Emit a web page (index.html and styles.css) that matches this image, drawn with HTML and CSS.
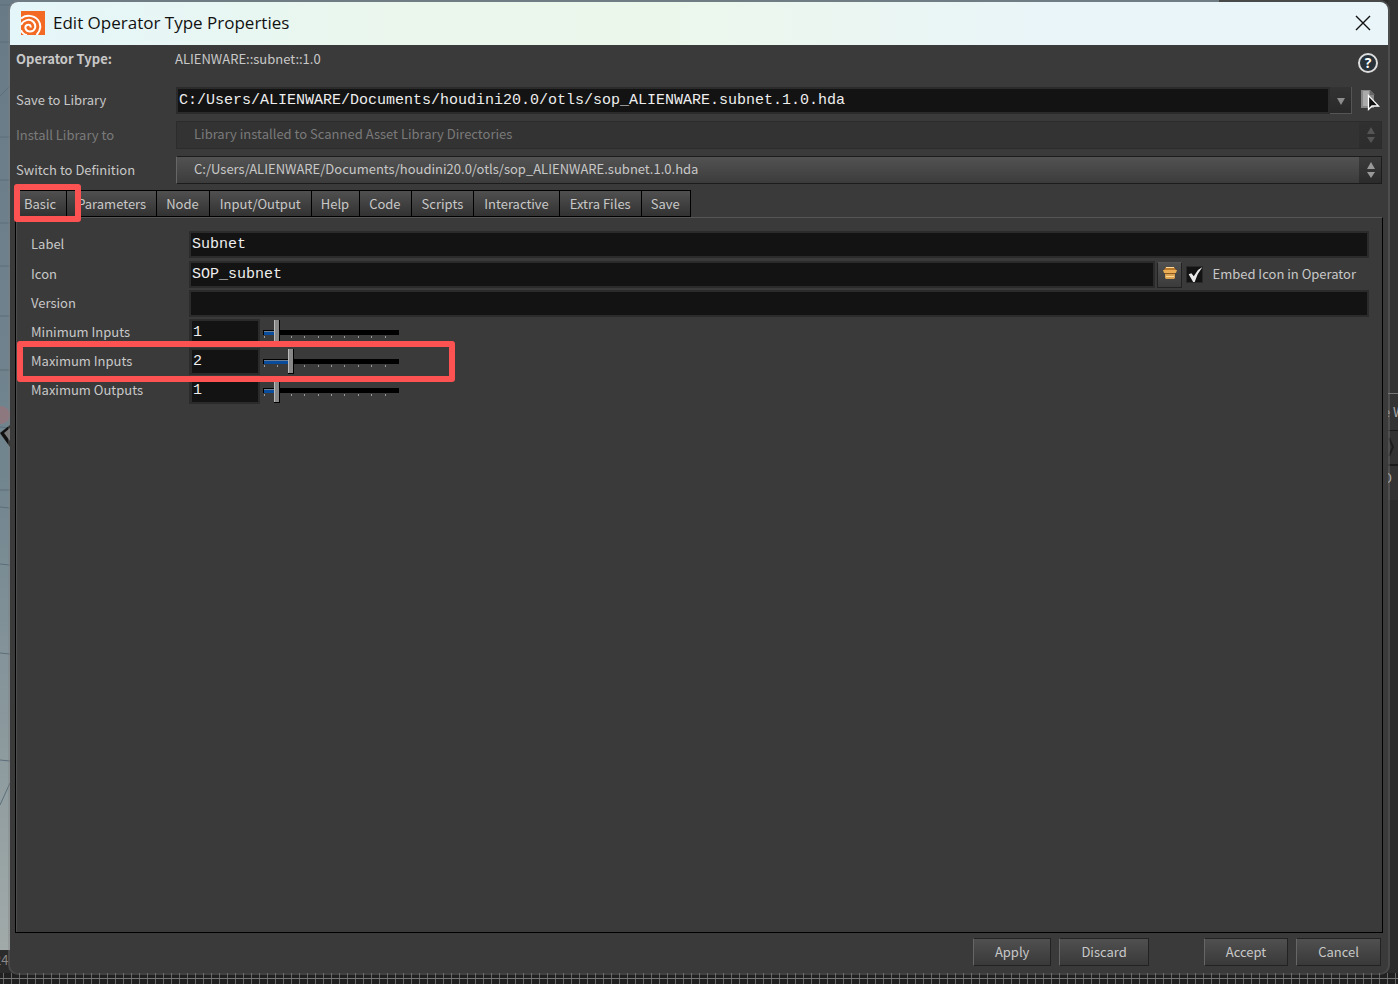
FILE: index.html
```html
<!DOCTYPE html>
<html lang="en">
<head>
    <meta charset="UTF-8">
    <meta name="viewport" content="width=device-width, initial-scale=1.0">
    <title>Edit Operator Type Properties</title>
    <link rel="stylesheet" href="styles.css">
</head>
<body>

<!-- Main application behind the dialog -->
<div class="backdrop" aria-hidden="true">
    <div class="viewport">
        <svg width="10" height="950" viewBox="0 0 10 950">
            <g stroke="#5c6e78" stroke-width="1" fill="none">
                <path d="M0 5h10M0 42h10M0 96L10 86M0 137h10M0 180h10M0 223h10M0 266h10M0 316h10M0 370h10M0 427l10 1M0 490h10M0 507l10 1M0 564l10 1M0 653l10 1M0 760l10 1M0 805l10-22"/>
            </g>
            <ellipse cx="1" cy="415" rx="9" ry="9" fill="#8e7880"/>
            <path d="M10 426L0 434l10 13z" fill="#777"/>
            <path d="M10 425L0 433l10 14v-6l-6-8 6-5z" fill="#111"/>
        </svg>
    </div>
    <div class="side">
        <span class="side-line"></span>
        <span class="side-text">e W</span>
        <svg width="10" height="36" viewBox="0 0 10 36"><path d="M0 0h10M0 35h10" stroke="#050505"/><path d="M1 8l4 9-4 9" fill="none" stroke="#1c1c1c" stroke-width="2"/></svg>
        <span class="side-text">D</span>
    </div>
    <div class="frame-number">24</div>
    <div class="timeline"></div>
</div>

<main class="window">
    <header class="titlebar">
        <svg class="logo" width="24" height="24" viewBox="0 0 24 24">
            <rect width="24" height="24" fill="#f26a24"/>
            <g fill="none" stroke="#fff" stroke-width="2">
                <path d="M0 7.500C5 3.500 13 4 17 9c3.500 4.500 3 10.500-1.500 15"/>
                <path d="M0 14C2 9 9 7 12.500 11c3.500 4 1.500 9.500-3.500 9.500-4.500 0-6-5-3-6.500 2.500-1 4 .5 3.500 2.500"/>
                <path d="M0 19c1 2.500 3 4.500 6 5"/>
            </g>
        </svg>
        <h1>Edit Operator Type Properties</h1>
        <button class="close" type="button" aria-label="Close">
            <svg width="16" height="16" viewBox="0 0 16 16"><path d="M1 1l14 14M15 1L1 15" stroke="#111" stroke-width="1.400"/></svg>
        </button>
    </header>

    <form class="content">
        <section class="settings">
            <div class="row type-row">
                <span class="caption strong">Operator Type:</span>
                <span class="type-name">ALIENWARE::subnet::1.0</span>
                <button class="help" type="button" aria-label="Help">?</button>
            </div>
            <div class="row">
                <label class="caption" for="library">Save to Library</label>
                <div class="combo">
                    <input class="field" id="library" type="text" value="C:/Users/ALIENWARE/Documents/houdini20.0/otls/sop_ALIENWARE.subnet.1.0.hda">
                    <button class="drop" type="button" aria-label="Recent libraries">
                        <svg width="8" height="7" viewBox="0 0 8 7"><path d="M0 0h8L4 7z" fill="#8c8c8c"/></svg>
                    </button>
                </div>
                <button class="chooser" type="button" aria-label="Choose file">
                    <svg width="22" height="24" viewBox="0 0 22 24">
                        <path d="M1 2h9l4 4v14H1z" fill="#888"/>
                        <path d="M3 3h6v15H3z" fill="#aaa"/>
                        <path d="M10 2v5h5z" fill="#666"/>
                        <path d="M8.500 7.500v14l3.500-3.500h6.500z" fill="#111" stroke="#fff" stroke-width="1.300"/>
                    </svg>
                </button>
            </div>
            <div class="row">
                <label class="caption dim" for="install">Install Library to</label>
                <div class="select disabled">
                    <select id="install" disabled>
                        <option>Library installed to Scanned Asset Library Directories</option>
                    </select>
                    <svg class="arrows" width="8" height="16" viewBox="0 0 8 16"><path d="M4 0l4 7H0zM0 10h8l-4 6z"/></svg>
                </div>
            </div>
            <div class="row">
                <label class="caption" for="definition">Switch to Definition</label>
                <div class="select">
                    <select id="definition">
                        <option>C:/Users/ALIENWARE/Documents/houdini20.0/otls/sop_ALIENWARE.subnet.1.0.hda</option>
                    </select>
                    <svg class="arrows" width="8" height="16" viewBox="0 0 8 16"><path d="M4 0l4 7H0zM0 10h8l-4 6z"/></svg>
                </div>
            </div>
        </section>

        <nav class="tabs">
            <button type="button">Basic</button>
            <button class="long" type="button">Parameters</button>
            <button type="button">Node</button>
            <button class="long" type="button">Input/Output</button>
            <button type="button">Help</button>
            <button type="button">Code</button>
            <button class="long" type="button">Scripts</button>
            <button class="long" type="button">Interactive</button>
            <button class="long" type="button">Extra Files</button>
            <button type="button">Save</button>
            <span class="marker marker-tab"></span>
        </nav>

        <section class="panel">
            <div class="param">
                <label for="label">Label</label>
                <input class="field" id="label" type="text" value="Subnet">
            </div>
            <div class="param">
                <label for="icon">Icon</label>
                <input class="field" id="icon" type="text" value="SOP_subnet">
                <button class="pick" type="button" aria-label="Choose icon">
                    <svg width="14" height="14" viewBox="0 0 14 14">
                        <path d="M3 1h8l2 3H1z" fill="#b9782a"/>
                        <path d="M0 4h14l-1 3H1z" fill="#eaad55"/>
                        <path d="M2 7h10v5l-1 1H3l-1-1z" fill="#d9a050"/>
                        <path d="M2 7.500h10" stroke="#8a5a20"/>
                        <path d="M3 1.500h8M3 10.500h8" stroke="#ffd996"/>
                    </svg>
                </button>
                <input class="check" id="embed" type="checkbox" checked>
                <label class="embed-label" for="embed">Embed Icon in Operator</label>
            </div>
            <div class="param">
                <label for="version">Version</label>
                <input class="field" id="version" type="text" value="">
            </div>
            <div class="param">
                <label for="minInputs">Minimum Inputs</label>
                <input class="field number" id="minInputs" type="text" value="1">
                <input class="slider" type="range" min="0" max="10" value="1" style="--value: 1" aria-label="Minimum Inputs">
            </div>
            <div class="param">
                <label for="maxInputs">Maximum Inputs</label>
                <input class="field number" id="maxInputs" type="text" value="2">
                <input class="slider" type="range" min="0" max="10" value="2" style="--value: 2" aria-label="Maximum Inputs">
                <span class="marker marker-inputs"></span>
            </div>
            <div class="param">
                <label for="maxOutputs">Maximum Outputs</label>
                <input class="field number" id="maxOutputs" type="text" value="1">
                <input class="slider" type="range" min="0" max="10" value="1" style="--value: 1" aria-label="Maximum Outputs">
            </div>
        </section>

        <footer class="actions">
            <button type="button">Apply</button>
            <button type="button">Discard</button>
            <button class="accept" type="button">Accept</button>
            <button type="button">Cancel</button>
        </footer>
    </form>
</main>

</body>
</html>
```
FILE: styles.css
```css
* {
    box-sizing: border-box;
}
body {
    margin: 0;
    padding: 2px 10px 11px;
    height: 100vh;
    display: flex;
    background: #333;
    color: #c8c8c8;
    font-family: "Noto Sans CJK SC", sans-serif;
    font-size: 13px;
    line-height: 20px;
    overflow: hidden;
}
button, input, select {
    margin: 0;
    padding: 0;
    border: 0;
    border-radius: 0;
    color: inherit;
    font: inherit;
}
button {
    background: none;
}

/* Application behind the dialog */
.backdrop {
    position: absolute;
    inset: 0;
    z-index: -1;
    overflow: hidden;
    background: #2b2b2b;
}
.viewport {
    position: absolute;
    inset: 0 179px 34px 0;
    background: linear-gradient(#687a86, #71858f 50%, #a1aaa9);
}
.side {
    position: absolute;
    top: 0;
    right: 0;
    width: 10px;
    height: 500px;
    padding-top: 393px;
    background: #333;
    overflow: hidden;
}
.side > * {
    display: block;
}
.side-line {
    height: 7px;
    border-top: 1px solid #777;
}
.side-text {
    height: 30px;
    margin-left: -5px;
    padding-top: 2px;
    white-space: nowrap;
    color: #aaa;
}
.frame-number {
    position: absolute;
    left: -6px;
    bottom: 14px;
    color: #888;
}
.timeline {
    position: absolute;
    left: 0;
    right: 0;
    bottom: 0;
    height: 11px;
    background:
        linear-gradient(transparent 5px, #777 5px 6px, transparent 6px),
        repeating-linear-gradient(to right, transparent 0 3px, #666 3px 4px, transparent 4px 8px),
        #202020;
}

/* Dialog */
.window {
    flex: 1;
    min-width: 0;
    display: flex;
    flex-direction: column;
    border-radius: 8px;
    background: #3a3a3a;
    box-shadow: 0 0 0 2px #80808059;
    overflow: hidden;
}
.titlebar {
    display: flex;
    align-items: center;
    height: 43px;
    padding: 0 17px 2px 11px;
    background: linear-gradient(to right, #e5f6fa, #ebf7ec 30%, #ecf7ec 48%, #e9f5f8 75%);
    color: #111;
}
.titlebar h1 {
    flex: 1;
    margin: 0 0 0 8px;
    font: 400 17px/24px "Open Sans", sans-serif;
}
.close {
    width: 16px;
    height: 16px;
}
.close svg {
    display: block;
}
.content {
    flex: 1;
    display: flex;
    flex-direction: column;
    padding: 0 5px 7px;
}
.settings {
    display: flex;
    flex-direction: column;
    gap: 7px;
    padding: 0 1px 6px;
}
.row {
    display: flex;
    align-items: center;
    height: 28px;
}
.type-row {
    margin-bottom: 6px;
}
.type-name {
    flex: 1;
}
.caption {
    flex: none;
    width: 160px;
}
.type-row .caption {
    width: 159px;
}
.strong {
    font-weight: 700;
}
.dim {
    color: #7a7a7a;
}
.help {
    align-self: flex-end;
    width: 20px;
    height: 20px;
    margin-right: 4px;
    border: 2px solid #ddd;
    border-radius: 50%;
    background: #27323a;
    color: #fff;
    font: 700 14px/16px "Open Sans", sans-serif;
}
.field {
    flex: 1;
    min-width: 0;
    height: 27px;
    padding: 0 1px;
    border: 2px solid #2b2b2b;
    background: #131313;
    color: #eee;
    font: 15px/20px "Liberation Mono", monospace;
}
.combo {
    flex: 1;
    display: flex;
    margin-right: 8px;
}
.drop {
    width: 22px;
    height: 27px;
    border: 1px solid #555;
    border-width: 0 1px 1px 0;
    background: linear-gradient(#333, #292929);
}
.chooser {
    width: 22px;
    height: 24px;
}
.chooser svg {
    display: block;
}
.select {
    position: relative;
    flex: 1;
    min-width: 0;
}
.select select {
    display: block;
    width: 100%;
    height: 28px;
    padding: 0 30px 2px 17px;
    appearance: none;
    border: 1px solid #1c1c1c;
    border-left-color: #666;
    background:
        linear-gradient(#3b3b3b, #2b2b2b) right / 22px 100% no-repeat,
        linear-gradient(#525252, #3c3c3c);
}
.arrows {
    position: absolute;
    top: 6px;
    right: 7px;
    fill: #999;
    pointer-events: none;
}
.disabled select {
    border-color: #2c2c2c;
    background: linear-gradient(#303030, #2d2d2d) right / 22px 100% no-repeat, #333;
    color: #7a7a7a;
    opacity: 1;
}
.disabled .arrows {
    fill: #555;
}

/* Tabs */
.tabs {
    position: relative;
    display: flex;
    height: 27px;
    padding-left: 1px;
}
.tabs button {
    padding: 0 10px 0 9px;
    border: 1px solid #000;
    border-left: 0;
    background: linear-gradient(#505050, #323232);
    white-space: nowrap;
}
.tabs button:first-child {
    padding-left: 8px;
}
.tabs .long {
    padding: 0 10px;
}
.panel {
    flex: 1;
    display: flex;
    flex-direction: column;
    gap: 2px;
    padding: 13px 13px 0 14px;
    border: 1px solid #000;
    border-top-color: #555;
    box-shadow: inset 1px 0 #4c4c4c;
}
.param {
    position: relative;
    display: flex;
    align-items: center;
    height: 27px;
}
.param:first-child {
    margin-bottom: 1px;
}
.param > label {
    padding-bottom: 2px;
}
.param > label:first-child {
    flex: none;
    width: 159px;
    padding-left: 1px;
}
.pick {
    width: 25px;
    height: 26px;
    margin: 0 4px 0 2px;
    border: 1px solid #222;
    border-top-color: #555;
    background: linear-gradient(#505050, #3b3b3b);
}
.check {
    appearance: none;
    width: 17px;
    height: 17px;
    border: 1px solid #292929;
    background: #131313;
}
.check:checked::before {
    content: "";
    display: block;
    width: 15px;
    height: 15px;
    background: #e8e8e8;
    clip-path: polygon(8% 48%, 26% 42%, 42% 62%, 70% 20%, 100% 0, 68% 48%, 48% 100%, 38% 100%);
}
.embed-label {
    margin: 0 13px 0 9px;
    white-space: nowrap;
}
.number {
    flex: none;
    width: 71px;
    border-left-width: 3px;
}
.slider {
    appearance: none;
    width: 139px;
    height: 27px;
    margin-left: 1px;
    background: repeating-linear-gradient(to right, #999 0 1px, transparent 1px 10%) 3px 17px / 134px 2px no-repeat;
}
.slider::-webkit-slider-runnable-track {
    height: 25px;
    background:
        linear-gradient(#6b7f94 1px, #0a4c9c 1px) 3px 11px / calc(var(--value) * 13px) 4px no-repeat,
        linear-gradient(#000, #000) 2px 10px / 136px 5px no-repeat;
}
.slider::-webkit-slider-thumb {
    appearance: none;
    width: 6px;
    height: 25px;
    border: 1px solid #000;
    border-width: 0 1px 1px 0;
    background: linear-gradient(to right, #bbb 1px, #888 1px);
}

/* Bottom buttons */
.actions {
    display: flex;
    justify-content: flex-end;
    gap: 8px;
    padding: 5px 2px 0 0;
}
.actions button {
    height: 28px;
    padding: 0 21px;
    border: 1px solid #222;
    border-left-color: #666;
    background: linear-gradient(#505050, #393939);
}
.actions .accept {
    margin-left: 47px;
}

/* Highlight boxes */
.marker {
    position: absolute;
    border: 6px solid #fc5252;
    border-radius: 3px;
    pointer-events: none;
}
.marker-tab {
    left: -1px;
    top: -6px;
    width: 67px;
    height: 38px;
}
.marker-inputs {
    left: -13px;
    top: -7px;
    z-index: 1;
    width: 438px;
    height: 41px;
}
```
